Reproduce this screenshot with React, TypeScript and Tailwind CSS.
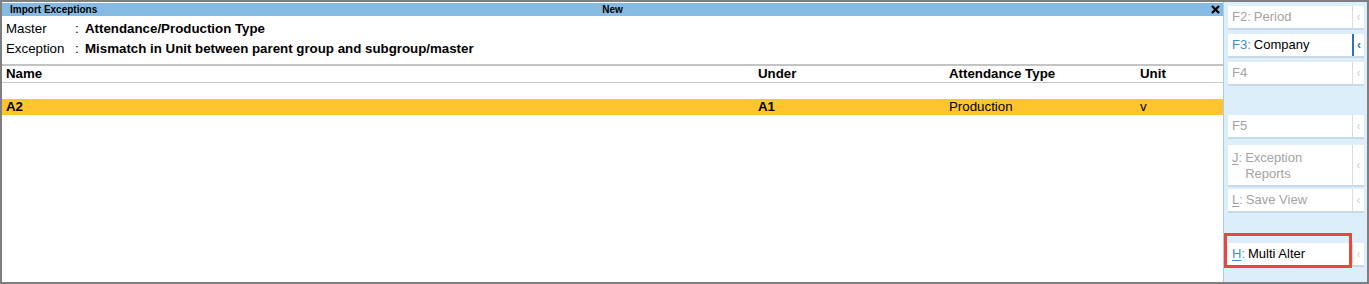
import type { ReactNode } from "react";

const FONT = { fontFamily: '"Liberation Sans", Arial, sans-serif' };

interface SideButtonProps {
  keyLabel: string;
  underline?: boolean;
  label?: ReactNode;
  active?: boolean;
  keyActive?: boolean;
  className?: string;
  tall?: boolean;
}

function SideButton({ keyLabel, underline, label, active, keyActive, className = "", tall }: SideButtonProps) {
  const keyColor = active || keyActive ? "text-[#3d8fd6]" : "text-[#a3a3a3]";
  const labelColor = active || keyActive ? "text-black" : "text-[#a3a3a3]";
  return (
    <div
      className={`flex bg-white border-b-2 border-[#c9d9e6] ${tall ? "h-[42px]" : "h-[24px]"} ${className}`}
    >
      <div className="flex flex-1 items-center pl-[4px] text-[13px] leading-[16px]">
        <span className={`${keyColor} self-start ${tall ? "mt-[5px]" : "mt-[3px]"}`}>
          {underline ? (
            <>
              <span className="underline underline-offset-2">{keyLabel[0]}</span>
              {keyLabel.slice(1)}
            </>
          ) : (
            keyLabel
          )}
        </span>
        {label && (
          <span className={`${labelColor} ml-[3px] self-start ${tall ? "mt-[5px]" : "mt-[3px]"}`}>
            {label}
          </span>
        )}
      </div>
      <div
        className={`w-[12px] flex items-center justify-center text-[12px] ${
          active ? "border-l-2 border-[#2d6fc4] text-[#2d6fc4] font-bold" : "border-l border-[#dcdcdc] text-[#cfcfcf]"
        }`}
      >
        ‹
      </div>
    </div>
  );
}

export default function App() {
  return (
    <div
      className="w-[1369px] h-[284px] border-2 border-[#7f7f7f] flex bg-white text-black overflow-hidden"
      style={FONT}
    >
      {/* Main area */}
      <div className="flex-1 flex flex-col min-w-0">
        {/* Title bar */}
        <div className="h-[13px] mt-px bg-[#85bae3] flex items-center relative px-[8px]">
          <span className="text-[10px] font-bold leading-none">Import Exceptions</span>
          <span className="absolute left-1/2 -translate-x-1/2 text-[10px] font-bold leading-none">New</span>
          <svg className="absolute right-[3px] top-[2px]" width="9" height="9" viewBox="0 0 9 9">
            <path d="M1 1 L8 8 M8 1 L1 8" stroke="#000" strokeWidth="2.2" />
          </svg>
        </div>

        {/* Info */}
        <div className="pt-[3px] pb-[5px] text-[13.3px]">
          <div className="h-[20px] flex items-center px-[4px]">
            <span className="w-[69px]">Master</span>
            <span className="w-[10px]">:</span>
            <span className="font-bold">Attendance/Production Type</span>
          </div>
          <div className="h-[20px] flex items-center px-[4px]">
            <span className="w-[69px]">Exception</span>
            <span className="w-[10px]">:</span>
            <span className="font-bold">Mismatch in Unit between parent group and subgroup/master</span>
          </div>
        </div>
        <div className="h-[2px] bg-[#c4c4c4]" />

        {/* Table header */}
        <div className="h-[17px] flex items-center px-[4px] text-[13.3px] font-bold border-b border-[#c8c8c8]">
          <span className="w-[752px]">Name</span>
          <span className="w-[191px]">Under</span>
          <span className="w-[191px]">Attendance Type</span>
          <span>Unit</span>
        </div>
        <div className="h-[16px]" />
        <div className="h-[16px] flex items-center px-[4px] text-[13.3px] bg-[#ffc42e]">
          <span className="w-[752px] font-bold">A2</span>
          <span className="w-[191px] font-bold">A1</span>
          <span className="w-[191px]">Production</span>
          <span>v</span>
        </div>
      </div>

      {/* Right button panel */}
      <div className="w-[144px] border-l border-[#a9cbe8] bg-[#ddeefb] flex flex-col pl-[4px] pr-[3px] relative">
        <SideButton keyLabel="F2:" label="Period" className="mt-[4px]" />
        <SideButton keyLabel="F3:" label="Company" active className="mt-[4px]" />
        <SideButton keyLabel="F4" className="mt-[4px]" />
        <SideButton keyLabel="F5" className="mt-[29px]" />
        <SideButton
          keyLabel="J:"
          underline
          tall
          label={
            <>
              Exception
              <br />
              Reports
            </>
          }
          className="mt-[6px]"
        />
        <SideButton keyLabel="L:" underline label="Save View" className="mt-[2px]" />
        <SideButton keyLabel="H:" underline label="Multi Alter" keyActive className="mt-[30px]" />
        {/* Highlight annotation */}
        <div className="absolute left-0 top-[231px] w-[128px] h-[35px] border-[3px] border-[#e8463f] pointer-events-none" />
      </div>
    </div>
  );
}
